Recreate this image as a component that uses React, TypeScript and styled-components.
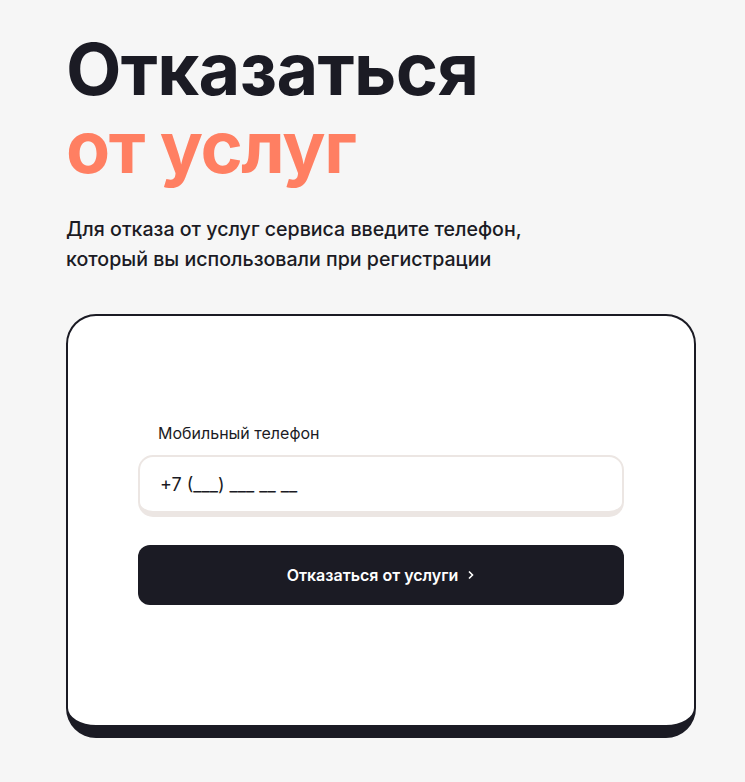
import styled, { createGlobalStyle } from "styled-components";

const GlobalStyle = createGlobalStyle`
  html, body {
    margin: 0;
    padding: 0;
    background: #f6f6f6;
  }
  body {
    font-family: Inter, "Noto Sans", sans-serif;
    color: #1b1b24;
  }
`;

const Page = styled.div`
  min-height: 782px;
  padding: 30px 49px 40px 66px;
  box-sizing: border-box;
`;

const Title = styled.h1`
  margin: 0;
  font-size: 72px;
  line-height: 78px;
  font-weight: 700;
  letter-spacing: -0.7px;
  color: #1b1b24;
`;

const Accent = styled.span`
  display: block;
  color: #ff7f62;
  letter-spacing: -1.4px;
`;

const Lead = styled.p`
  margin: 28px 0 0;
  font-size: 19.6px;
  line-height: 30px;
  font-weight: 500;
`;

const Card = styled.div`
  margin-top: 40px;
  width: 630px;
  box-sizing: border-box;
  background: #fff;
  border: 2px solid #1b1b24;
  border-bottom-width: 13px;
  border-radius: 30px;
  padding: 106px 70px 120px;
  display: flex;
  flex-direction: column;
`;

const Label = styled.label`
  font-size: 16px;
  line-height: 22px;
  padding-left: 20px;
  margin-bottom: 11px;
`;

const Field = styled.div`
  height: 62px;
  box-sizing: border-box;
  border: 2px solid #ece6e3;
  border-bottom-width: 6px;
  border-radius: 15px;
  padding: 0 20px;
  display: flex;
  align-items: center;
  font-size: 18px;
`;

const Button = styled.button`
  margin-top: 28px;
  height: 60px;
  border: none;
  border-radius: 12px;
  background: #1b1b24;
  color: #fff;
  font-family: inherit;
  font-size: 16px;
  font-weight: 600;
  display: flex;
  align-items: center;
  justify-content: center;
  gap: 9px;
  cursor: pointer;
`;

export default function App() {
  return (
    <>
      <GlobalStyle />
      <Page>
        <Title>
          Отказаться
          <Accent>от услуг</Accent>
        </Title>
        <Lead>
          Для отказа от услуг сервиса введите телефон,
          <br />
          который вы использовали при регистрации
        </Lead>
        <Card>
          <Label>Мобильный телефон</Label>
          <Field>+7 (___) ___ __ __</Field>
          <Button>
            Отказаться от услуги
            <svg width="8" height="10" viewBox="0 0 8 10" fill="none">
              <path d="M2 1.5L5.5 5L2 8.5" stroke="#fff" strokeWidth="1.6" />
            </svg>
          </Button>
        </Card>
      </Page>
    </>
  );
}
